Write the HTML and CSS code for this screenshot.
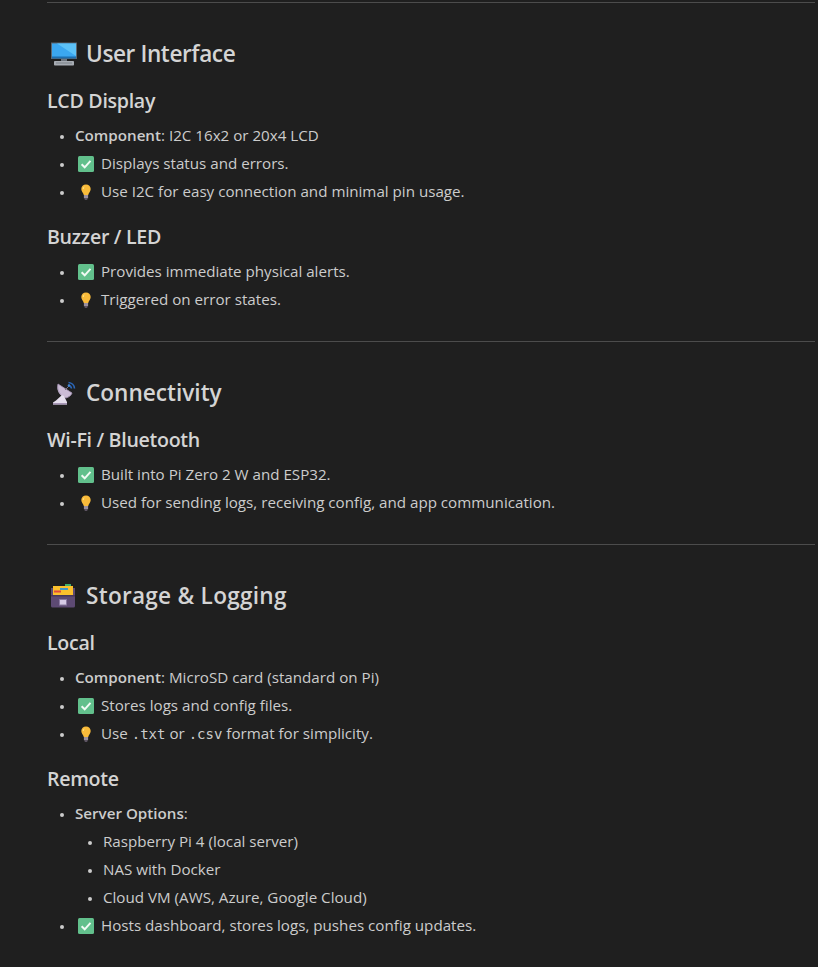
FILE: index.html
```html
<!DOCTYPE html>
<html lang="en">
<head>
<meta charset="utf-8">
<title>Hardware notes</title>
<link rel="stylesheet" href="styles.css">
</head>
<body>
<svg class="defs" width="0" height="0" aria-hidden="true">
  <defs>
    <symbol id="check" viewBox="0 0 16 16">
      <rect x="0" y="0" width="16" height="16" rx="1.500" fill="#62c08c"/>
      <path d="M3.600 8.300 6.700 11.300 12.500 4.900" fill="none" stroke="#f2fbf5" stroke-width="2"/>
    </symbol>
    <symbol id="bulb" viewBox="0 0 16 16">
      <path d="M8 0.500C5.300 0.500 3.300 2.500 3.300 5c0 2.300 1.800 3.500 2.500 6h4.400c.7-2.500 2.500-3.700 2.500-6C12.700 2.500 10.700 .5 8 .5z" fill="#f9bb3a"/>
      <path d="M6.200 2.800C5.500 3.400 5.200 4.200 5.200 5" fill="none" stroke="#ffe88c" stroke-width="1"/>
      <rect x="5.900" y="11" width="4.200" height="3.300" fill="#9a8f9e"/>
      <rect x="6.700" y="14.300" width="2.600" height="1.500" fill="#6a5f72"/>
    </symbol>
  </defs>
</svg>
<main class="doc">
  <hr class="rule">
  <h2 class="section narrow"><svg class="head-icon" viewBox="0 0 26 24" aria-hidden="true"><rect x="0.500" y="1" width="25" height="15.500" fill="#3ba7f0" stroke="#5c6670"/><path d="M1 1.500H25V14L6 1.500z" fill="#5cc2f8"/><rect x="1" y="14.500" width="24" height="2" fill="#1d6fb0"/><rect x="10" y="17" width="6" height="2" fill="#6e7680"/><rect x="3" y="19" width="20" height="4.500" rx="0.800" fill="#a7acb3"/><rect x="5" y="20.500" width="16" height="1" fill="#7c8189"/></svg>User Interface</h2>
  <h3 class="sub">LCD Display</h3>
  <ul class="list">
    <li><strong>Component</strong>: I2C 16x2 or 20x4 LCD</li>
    <li><svg class="emoji"><use href="#check"/></svg>Displays status and errors.</li>
    <li><svg class="emoji"><use href="#bulb"/></svg>Use I2C for easy connection and minimal pin usage.</li>
  </ul>
  <h3 class="sub">Buzzer / LED</h3>
  <ul class="list">
    <li><svg class="emoji"><use href="#check"/></svg>Provides immediate physical alerts.</li>
    <li><svg class="emoji"><use href="#bulb"/></svg>Triggered on error states.</li>
  </ul>
  <hr class="rule">
  <h2 class="section regular"><svg class="head-icon" viewBox="0 0 26 24" aria-hidden="true"><path d="M7 3C5 9 8 15 15 17c3-1 5-3 6-5z" fill="#cbbcd6"/><path d="M7 3 21 12c-1 3-3 4-6 5C9 15 6 9 7 3z" fill="none" stroke="#a796b6" stroke-width=".8"/><path d="M11 14 5 19.500 2 21.500v2H16V21l-3-6z" fill="#e6dfee"/><path d="M2 22h14v1.500H2z" fill="#a796b6"/><path d="M14 9 18.500 4.500" stroke="#7e7488" stroke-width="1"/><path d="M17 4.500A3.500 3.500 0 0 1 20.500 7.500" fill="none" stroke="#2a66b8" stroke-width="1.600"/><path d="M17.500 1.500A6.500 6.500 0 0 1 23.500 7.500" fill="none" stroke="#2a66b8" stroke-width="1.600"/><circle cx="18" cy="4.500" r="1.300" fill="#3f86d8"/></svg>Connectivity</h2>
  <h3 class="sub">Wi-Fi / Bluetooth</h3>
  <ul class="list">
    <li><svg class="emoji"><use href="#check"/></svg>Built into Pi Zero 2 W and ESP32.</li>
    <li><svg class="emoji"><use href="#bulb"/></svg>Used for sending logs, receiving config, and app communication.</li>
  </ul>
  <hr class="rule">
  <h2 class="section wide"><svg class="head-icon" viewBox="1 0 26 24" aria-hidden="true"><rect x="15" y="0" width="6" height="3" fill="#3fae6a"/><rect x="3" y="2" width="20" height="9" fill="#fbc02d"/><rect x="10" y="4" width="8" height="2" fill="#3f97c9"/><rect x="4" y="6.500" width="7" height="2" fill="#e0493e"/><path d="M1 4h2v7h20V4h2v18a1.500 1.500 0 0 1-1.500 1.500h-21A1.500 1.500 0 0 1 1 22z" fill="#5d4a73"/><rect x="1" y="11" width="24" height="1.500" fill="#47375a"/><rect x="9.500" y="15.500" width="7" height="5.500" fill="#d6cbe6" stroke="#8a7aa0"/></svg>Storage &amp; Logging</h2>
  <h3 class="sub">Local</h3>
  <ul class="list">
    <li><strong>Component</strong>: MicroSD card (standard on Pi)</li>
    <li><svg class="emoji"><use href="#check"/></svg>Stores logs and config files.</li>
    <li><svg class="emoji"><use href="#bulb"/></svg>Use <code>.txt</code> or <code>.csv</code> format for simplicity.</li>
  </ul>
  <h3 class="sub">Remote</h3>
  <ul class="list">
    <li><strong>Server Options</strong>:
      <ul class="nested">
        <li>Raspberry Pi 4 (local server)</li>
        <li>NAS with Docker</li>
        <li>Cloud VM (AWS, Azure, Google Cloud)</li>
      </ul>
    </li>
    <li><svg class="emoji"><use href="#check"/></svg>Hosts dashboard, stores logs, pushes config updates.</li>
  </ul>
</main>
</body>
</html>
```
FILE: styles.css
```css
html, body {
  margin: 0;
  background: #1f1f1f;
  height: 100%;
  overflow: hidden;
}
.defs {
  position: absolute;
}
.doc {
  padding: 2px 3px 0 47px;
  color: #cccccc;
  font-family: "Open Sans", sans-serif;
  font-size: 15.170px;
  line-height: 28px;
}
.rule {
  margin: 0;
  border: 0;
  height: 1px;
  background: #4c4c4c;
}
.section {
  display: flex;
  align-items: center;
  margin: 34px 0 0;
  height: 34px;
  font-size: 22.600px;
  font-weight: 600;
  color: #d4d4d4;
}
.narrow {
  letter-spacing: -0.4px;
}
.regular {
  letter-spacing: 0;
}
.wide {
  letter-spacing: 0.26px;
}
.head-icon {
  width: 26px;
  height: 24px;
  margin: 0 9px 0 4px;
}
.sub {
  margin: 16px 0 0;
  height: 28px;
  font-size: 19.600px;
  font-weight: 600;
  letter-spacing: -0.3px;
  color: #d4d4d4;
}
.list {
  list-style: disc;
  margin: 6px 0 0;
  padding: 0 0 0 28px;
}
.list li::marker {
  font-size: 12px;
}
.list + .sub {
  margin-top: 18px;
}
.list + .rule {
  margin-top: 28px;
}
.nested {
  list-style: disc;
  margin: 0;
  padding: 0 0 0 28px;
}
.emoji {
  width: 16px;
  height: 16px;
  margin: 0 7px 0 3px;
  vertical-align: -3px;
}
strong {
  font-weight: 600;
}
code {
  font-family: "DejaVu Sans Mono", monospace;
  font-size: 14px;
  line-height: 1;
}
```
